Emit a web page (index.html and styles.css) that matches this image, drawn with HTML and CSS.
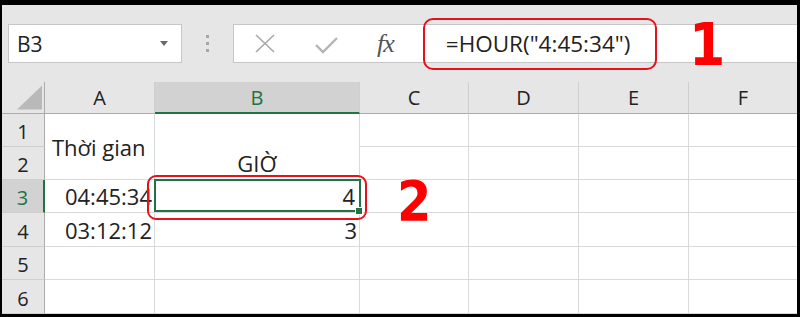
FILE: index.html
```html
<!DOCTYPE html>
<html lang="vi">
<head>
    <meta charset="UTF-8">
    <title>HOUR</title>
    <link rel="stylesheet" href="styles.css">
</head>
<body>
    <div class="frame">
        <div class="toolbar">
            <div class="namebox">
                <span>B3</span>
                <svg class="arrow" width="8" height="5" viewBox="0 0 8 5"><polygon points="0,0 8,0 4,5" fill="#6a6a6a"/></svg>
            </div>
            <div class="dots"><i></i><i></i><i></i></div>
            <div class="formula">
                <svg class="ico-x" width="20" height="19" viewBox="0 0 20 19"><path d="M1 1 L19 18 M19 1 L1 18" stroke="#a8a8a8" stroke-width="1.6" fill="none"/></svg>
                <svg class="ico-ok" width="23" height="17" viewBox="0 0 23 17"><path d="M1 8 L8 15 L22 1" stroke="#b4b4b4" stroke-width="2.4" fill="none"/></svg>
                <span class="fx">fx</span>
                <span class="ftext">=HOUR("4:45:34")</span>
            </div>
        </div>

        <div class="sheet">
            <div class="corner"><svg width="26" height="25" viewBox="0 0 26 25"><polygon points="26,0 26,25 0,25" fill="#b9b9b9"/></svg></div>
            <div class="colhead">A</div>
            <div class="colhead active">B</div>
            <div class="colhead">C</div>
            <div class="colhead">D</div>
            <div class="colhead">E</div>
            <div class="colhead last">F</div>

            <div class="rowhead">1</div>
            <div class="cell merged left-mid">Thời gian</div>
            <div class="cell merged center-bottom">GIỜ</div>
            <div class="cell"></div><div class="cell"></div><div class="cell"></div><div class="cell last"></div>

            <div class="rowhead">2</div>
            <div class="cell"></div><div class="cell"></div><div class="cell"></div><div class="cell last"></div>

            <div class="rowhead active">3</div>
            <div class="cell num">04:45:34</div>
            <div class="cell num sel">4</div>
            <div class="cell"></div><div class="cell"></div><div class="cell"></div><div class="cell last"></div>

            <div class="rowhead">4</div>
            <div class="cell num">03:12:12</div>
            <div class="cell num">3</div>
            <div class="cell"></div><div class="cell"></div><div class="cell"></div><div class="cell last"></div>

            <div class="rowhead">5</div>
            <div class="cell"></div><div class="cell"></div><div class="cell"></div><div class="cell"></div><div class="cell"></div><div class="cell last"></div>

            <div class="rowhead">6</div>
            <div class="cell"></div><div class="cell"></div><div class="cell"></div><div class="cell"></div><div class="cell"></div><div class="cell last"></div>
        </div>

        <div class="mark mark-1"></div>
        <div class="step step-1">1</div>
        <div class="mark mark-2"></div>
        <div class="step step-2">2</div>
    </div>
</body>
</html>
```

FILE: styles.css
```css
body {
    margin: 0;
    background: #000;
    font-family: 'Open Sans', 'Noto Sans', sans-serif;
    color: #222;
}
.frame {
    position: relative;
    width: 795px;
    height: 309px;
    margin: 5px 3px 3px 2px;
    background: #e6e6e6;
    overflow: hidden;
}

/* name box + formula bar */
.toolbar { display: flex; align-items: center; height: 77px; padding-left: 6px; }
.namebox {
    width: 174px; height: 39px; box-sizing: border-box;
    background: #fff; border: 1px solid #c6c6c6;
    display: flex; align-items: center; justify-content: space-between;
    padding: 0 13px 0 8px; font-size: 21px;
}
.dots { width: 51px; display: flex; flex-direction: column; align-items: center; gap: 4px; }
.dots i { display: block; width: 3px; height: 3px; background: #a6a6a6; }
.formula {
    flex: 1; height: 39px; box-sizing: border-box;
    background: #fff; border: 1px solid #c6c6c6; border-right: none;
    display: flex; align-items: center; padding-left: 21px;
}
.ico-ok { margin-left: 40px; margin-top: 3px; }
.fx { margin-left: 39px; font-family: 'Liberation Serif', serif; font-style: italic; font-size: 26px; color: #555; letter-spacing: -1px; }
.ftext { margin-left: 52px; font-size: 22.5px; }

/* grid */
.sheet {
    display: grid;
    grid-template-columns: 43px 110px 205px 109px 110px 110px 108px;
    grid-template-rows: 32px 33px 33px 33px 34px 33px 34px;
}
.corner { border-right: 1px solid #ababab; border-bottom: 1px solid #ababab; display: flex; align-items: flex-end; padding: 0 2px 3px 15px; box-sizing: border-box; }
.colhead {
    display: flex; align-items: center; justify-content: center;
    border-right: 1px solid #cfcfcf; border-bottom: 1px solid #ababab;
    font-size: 20px; box-sizing: border-box;
}
.colhead.last { border-right: none; }
.colhead.active { background: #d2d2d2; color: #217346; border-bottom: 2px solid #217346; }
.rowhead {
    display: flex; align-items: center; justify-content: center; padding-top: 3px;
    border-right: 1px solid #ababab; border-bottom: 1px solid #cfcfcf;
    font-size: 20px; box-sizing: border-box;
}
.rowhead.active { background: #d2d2d2; color: #217346; border-right: 2px solid #217346; }
.cell {
    background: #fff; box-sizing: border-box;
    border-right: 1px solid #d9d9d9; border-bottom: 1px solid #d9d9d9;
    font-size: 22px; line-height: 30px;
}
.cell.last { border-right: none; }
.cell.merged { grid-row: span 2; display: flex; }
.left-mid { align-items: center; padding-left: 7px; }
.center-bottom { align-items: flex-end; justify-content: center; padding-bottom: 1px; }
.num { display: flex; align-items: flex-end; justify-content: flex-end; padding: 0 2px 1px 0; }
.sel { position: relative; padding-right: 4px; }
.sel::before {
    content: ''; position: absolute; top: -1px; left: -1px; right: -2px; bottom: 0;
    border: 2px solid #217346;
}
.sel::after {
    content: ''; position: absolute; right: -4px; bottom: -3px;
    width: 6px; height: 6px; background: #217346; border: 1px solid #fff;
}

/* red annotations */
.mark { position: absolute; border: 2px solid #e8101a; box-sizing: border-box; }
.mark-1 { left: 421px; top: 13px; width: 234px; height: 52px; border-radius: 10px; }
.mark-2 { left: 145px; top: 170px; width: 220px; height: 45px; border-radius: 9px; }
.step { position: absolute; font-family: 'DejaVu Sans', sans-serif; font-stretch: condensed; font-weight: bold; color: #f00; line-height: 1; }
.step-1 { left: 687px; top: 11px; font-size: 58px; }
.step-2 { left: 395px; top: 169px; font-size: 55px; }
```
